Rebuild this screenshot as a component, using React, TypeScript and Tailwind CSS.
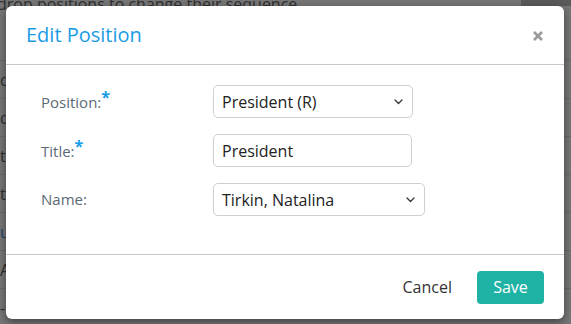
import React from 'react'

const font = { fontFamily: '"Open Sans", "Noto Sans", sans-serif' }

function Chevron() {
  return (
    <svg width="9" height="6" viewBox="0 0 9 6" fill="none" className="shrink-0">
      <path d="M1 1l3.5 3.5L8 1" stroke="#333" strokeWidth="1.3" strokeLinecap="round" strokeLinejoin="round" />
    </svg>
  )
}

function Label({ text, required }: { text: string; required?: boolean }) {
  return (
    <div className="w-[172px] shrink-0 text-[15px] text-[#5b6a76]">
      {text}
      {required && <span className="relative -top-[5px] text-[16px] font-bold text-[#1a9be6]">*</span>}
    </div>
  )
}

export default function App() {
  const rows = ['d', 'd', 't', 't', 'u', 'A', '-']
  return (
    <div className="relative h-[324px] w-[571px] overflow-hidden bg-[#767676]" style={font}>
      {/* Page behind the overlay */}
      <div className="absolute inset-0">
        <div className="flex h-[6px] items-end">
          <div className="-ml-[3px] flex-1 text-[16px] leading-[20px] text-[#2f2f2f] translate-y-[8px]">
            drop positions to change their sequence
          </div>
          <div className="h-full w-[50px] bg-[#5a5a5a]" />
        </div>
        <div className="mt-[54px] flex flex-col">
          {rows.map((r, i) => (
            <div
              key={i}
              className={`flex h-[38px] items-center border-t border-[#6a6a6a] pl-0 text-[16px] ${r === 'u' ? 'text-[#23466a]' : 'text-[#2f2f2f]'}`}
            >
              {r}
            </div>
          ))}
        </div>
      </div>

      {/* Dialog */}
      <div className="absolute left-[6px] top-[6px] flex h-[313px] w-[558px] flex-col rounded-[6px] bg-white shadow-[0_3px_8px_rgba(0,0,0,0.45)]">
        <div className="flex h-[59px] shrink-0 items-center justify-between border-b border-[#c9c9c9] pl-[20px] pr-[20px]">
          <h2 className="text-[20px] text-[#1a9be6]">Edit Position</h2>
          <svg width="12" height="12" viewBox="0 0 12 12" className="mt-[1px]">
            <path d="M2 2l8 8M10 2l-8 8" stroke="#9a9a9a" strokeWidth="2.6" strokeLinecap="butt" />
          </svg>
        </div>

        <div className="flex flex-1 flex-col gap-[16px] pl-[35px] pt-[20px]">
          <div className="flex items-center">
            <Label text="Position:" required />
            <div className="flex h-[33px] w-[200px] items-center justify-between rounded-[5px] border border-[#cfcfcf] pl-[8px] pr-[9px] text-[16px] text-[#222]">
              <span>President (R)</span>
              <Chevron />
            </div>
          </div>
          <div className="flex items-center">
            <Label text="Title:" required />
            <div className="flex h-[33px] w-[199px] items-center rounded-[5px] border border-[#cfcfcf] pl-[8px] text-[16px] text-[#222]">
              President
            </div>
          </div>
          <div className="flex items-center">
            <Label text="Name:" />
            <div className="flex h-[33px] w-[212px] items-center justify-between rounded-[5px] border border-[#cfcfcf] pl-[8px] pr-[9px] text-[16px] text-[#222]">
              <span>Tirkin, Natalina</span>
              <Chevron />
            </div>
          </div>
        </div>

        <div className="flex h-[65px] shrink-0 items-center justify-end gap-[25px] border-t border-[#c9c9c9] pr-[20px]">
          <button className="text-[16px] text-[#333]">Cancel</button>
          <button className="h-[33px] w-[67px] rounded-[4px] bg-[#1fb3a6] text-[16px] text-white">Save</button>
        </div>
      </div>
    </div>
  )
}
